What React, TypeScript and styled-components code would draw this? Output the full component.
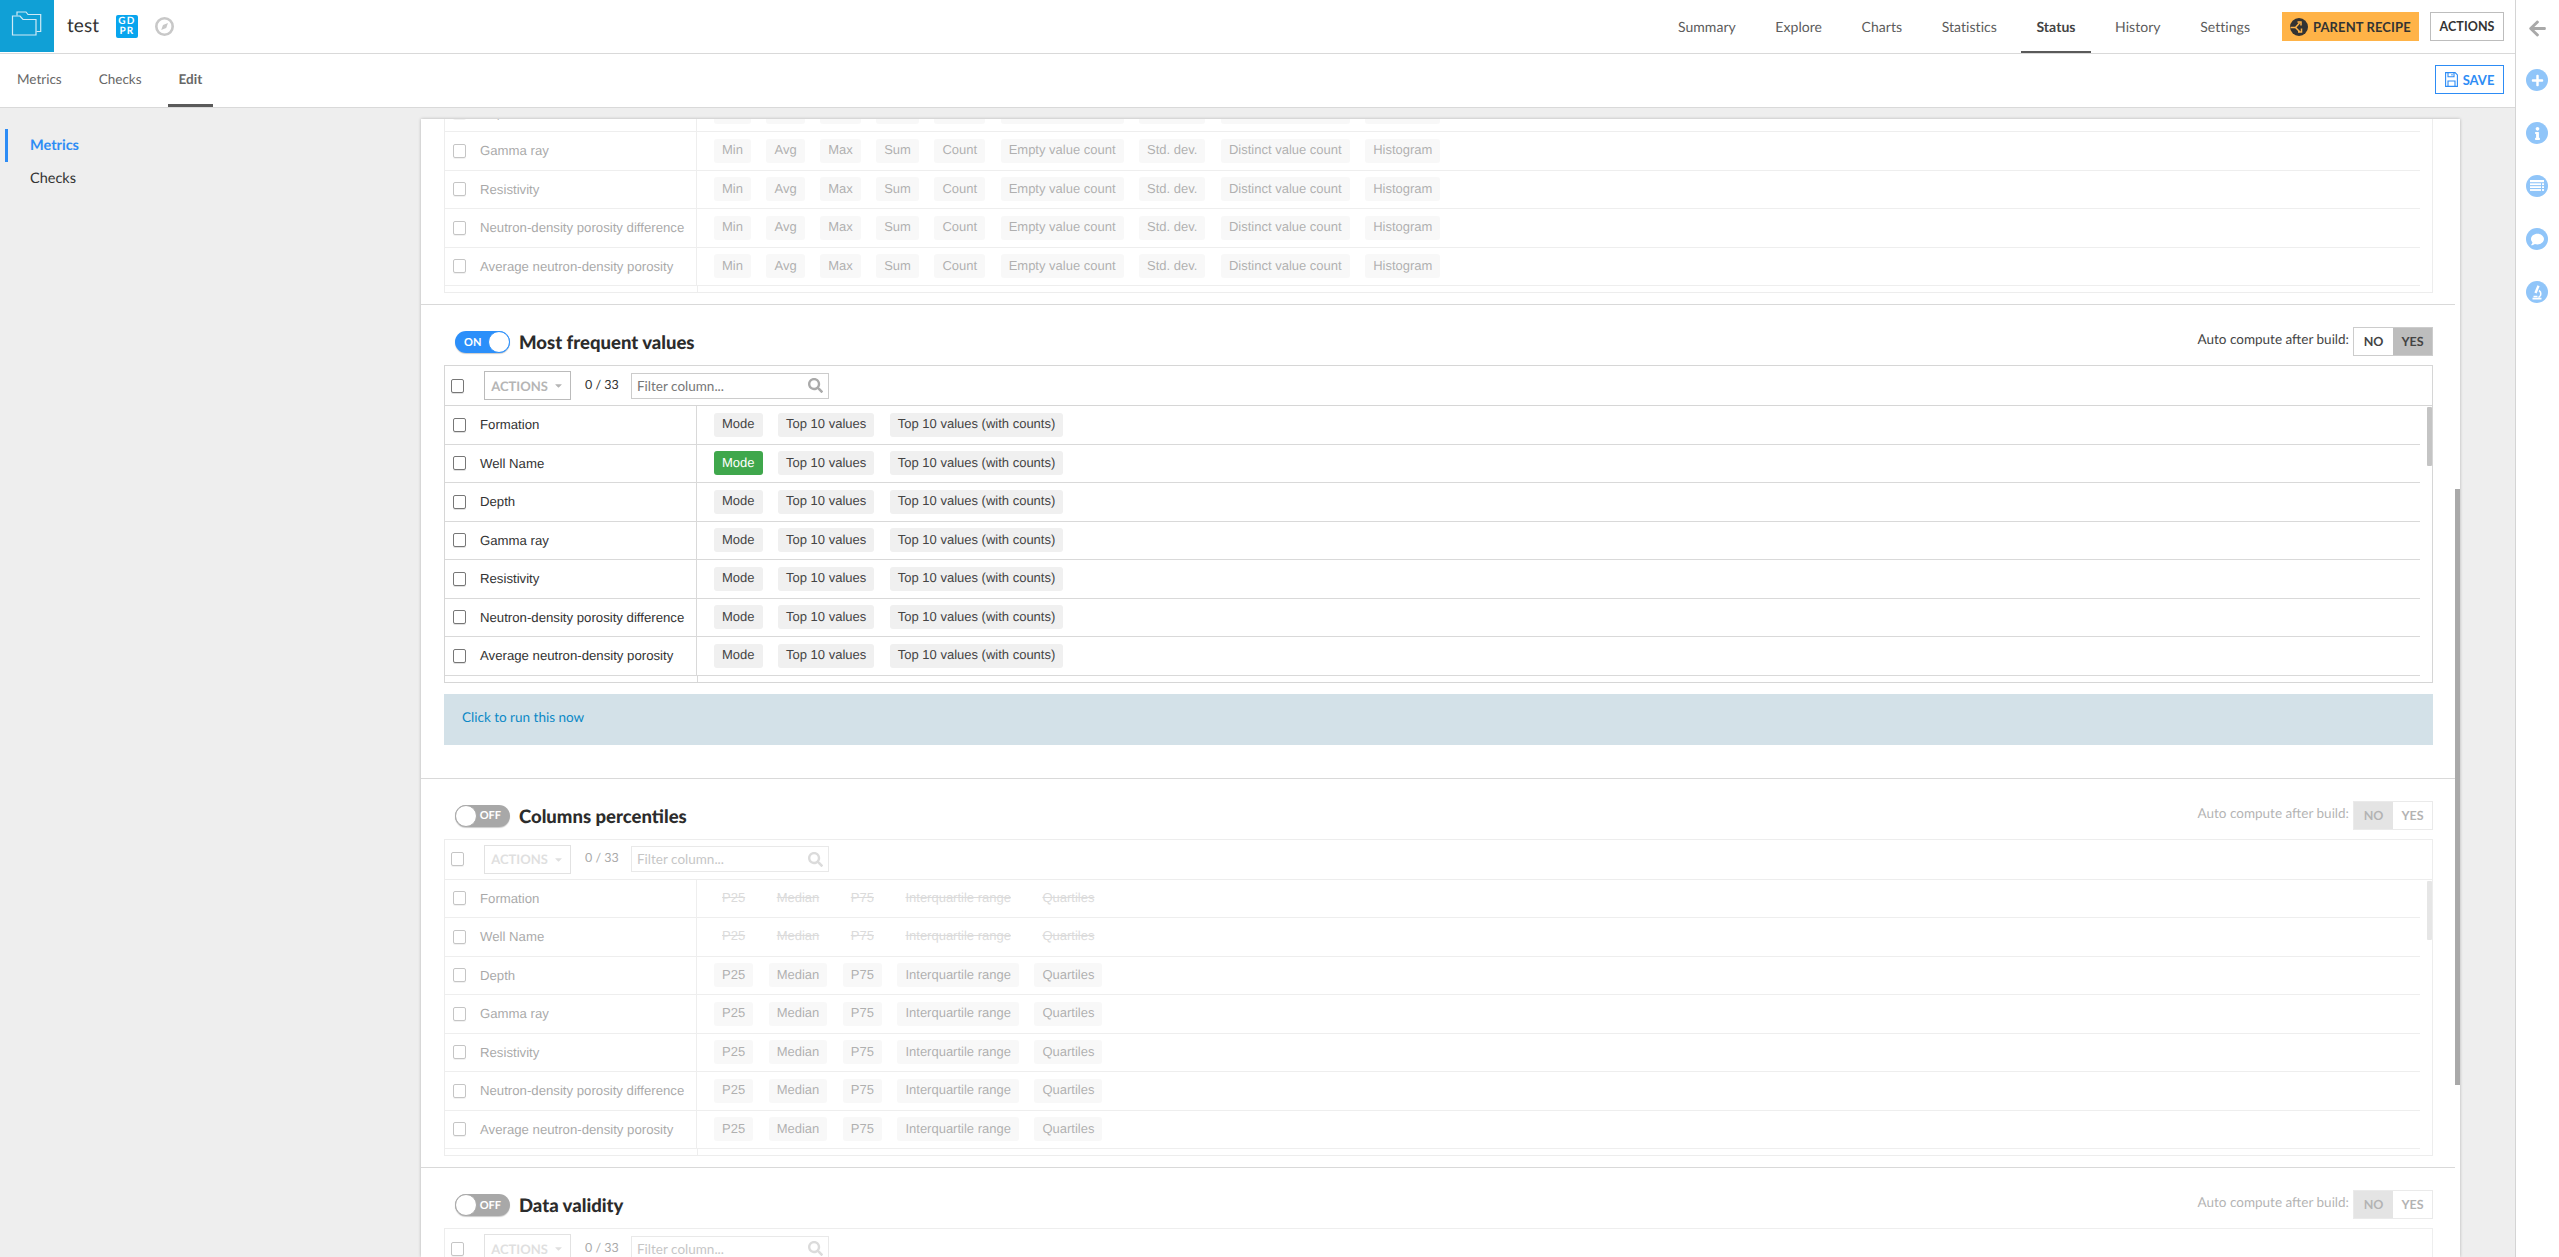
import React from "react";
import styled, { createGlobalStyle } from "styled-components";
import { FaArrowLeft, FaPlus, FaInfo, FaComment, FaCaretDown, FaSearch } from "react-icons/fa";

const SANS = `"Lato", "Liberation Sans", sans-serif`;
const ARIAL = `"Liberation Sans", Arial, sans-serif`;

const Global = createGlobalStyle`
  html, body { margin: 0; padding: 0; height: 100%; background: #fff; overflow: hidden; }
  * { box-sizing: border-box; }
  #root { height: 100%; text-rendering: geometricPrecision; }
`;

const Page = styled.div`
  display: flex; width: 2559px; height: 1257px; overflow: hidden; font-family: ${SANS}; color: #333;
`;
const Main = styled.div`
  flex: 0 0 2516px; display: flex; flex-direction: column; border-right: 1px solid #d4d4d4; min-width: 0;
`;
const TopBar = styled.header`
  flex: 0 0 53px; display: flex; align-items: stretch; border-bottom: 1px solid #d9d9d9; background: #fff; padding-right: 11px;
`;
const LogoBox = styled.div`
  flex: 0 0 54px; height: 52px; background: #10a0d6; display: flex;
`;
const Title = styled.div`
  margin-left: 13px; font-size: 19px; line-height: 52px; color: #333; letter-spacing: 0.1px; width: 49px;
`;
const Gdpr = styled.div`
  align-self: center; width: 22px; height: 23px; border-radius: 2px; background: #08a5ee; color: #fff;
  font-family: ${SANS}; font-weight: 700; font-size: 10px; line-height: 9.5px; letter-spacing: 1.2px; text-align: center; padding-top: 2px;
`;
const CompassWrap = styled.div`
  align-self: center; margin-left: 17px; display: flex;
`;
const TopNav = styled.nav`
  margin-left: auto; display: flex; gap: 9.5px; margin-right: 17px;
`;
const TopItem = styled.a<{ $active?: boolean }>`
  height: 53px; padding: 0 15px; display: flex; align-items: center; font-size: 14px; letter-spacing: 0.05px;
  color: ${p => (p.$active ? "#444" : "#5c5c5c")}; font-weight: ${p => (p.$active ? 700 : 400)};
  border-bottom: 2px solid ${p => (p.$active ? "#5a5a5a" : "transparent")}; padding-top: 1px;
`;
const ParentBtn = styled.button`
  align-self: flex-start; margin-top: 12px; width: 137px; height: 29px; background: #ffb347; border: 0; padding: 0 0 0 8px; display: flex; align-items: center; gap: 5px;
  font-family: ${SANS}; font-weight: 700; font-size: 13px; color: #333; letter-spacing: 0.1px; white-space: nowrap;
`;
const ActionsBtn = styled.button`
  align-self: flex-start; margin: 12px 0 0 11px; width: 74px; height: 29px; background: #fff; border: 1px solid #bdbdbd; padding: 0;
  font-family: ${SANS}; font-weight: 700; font-size: 12.5px; color: #333; letter-spacing: 0.1px;
`;
const SubBar = styled.div`
  flex: 0 0 53px; display: flex; align-items: stretch; border-bottom: 1px solid #d9d9d9; background: #fff; padding: 0 11px 0 6px;
`;
const SubTab = styled.a<{ $active?: boolean }>`
  height: 53px; padding: 0 11px; margin-right: 15px; display: flex; align-items: center; font-size: 13.5px;
  color: #666; font-weight: ${p => (p.$active ? 700 : 400)};
  border-bottom: 3px solid ${p => (p.$active ? "#5a5a5a" : "transparent")}; padding-top: 0;
`;
const SaveBtn = styled.button`
  margin: 11px 0 0 auto; width: 69px; height: 29px; background: #fff; border: 1px solid #2d8cf5; color: #2d8cf5; padding: 0; display: flex; align-items: center; justify-content: center; gap: 5px;
  font-family: ${SANS}; font-weight: 700; font-size: 13px;
`;
const Body = styled.div`
  flex: 1; min-height: 0; display: flex; background: #eee;
`;
const SideNav = styled.nav`
  flex: 0 0 421px; padding: 21px 0 0 5px; display: flex; flex-direction: column;
`;
const SideItem = styled.a<{ $active?: boolean }>`
  height: 33px; display: flex; align-items: center; padding-left: 22px; font-size: 14.5px;
  border-left: 3px solid ${p => (p.$active ? "#2d8cf5" : "transparent")};
  color: ${p => (p.$active ? "#2d8cf5" : "#333")}; font-weight: ${p => (p.$active ? 700 : 400)};
`;
const Panel = styled.main`
  position: relative; flex: 0 0 2039px; margin-top: 11px; background: #fff; overflow: hidden; box-shadow: 0 0 3px rgba(0,0,0,0.25); padding-right: 5px;
`;
const PageThumb = styled.div`
  position: absolute; right: 0; top: 370px; width: 5px; height: 596px; background: #a9a9a9;
`;
const Section = styled.section<{ $first?: boolean }>`
  padding: ${p => (p.$first ? "0" : "22px")} 22px 11px 23px; border-bottom: 1px solid #d9d9d9;
`;
const Head = styled.div`
  display: flex; align-items: flex-start; justify-content: space-between; height: 29px; margin-bottom: 9px;
`;
const HeadLeft = styled.div`
  display: flex; align-items: center; gap: 9px; margin: 4px 0 0 11px;
`;
const Toggle = styled.div<{ $on: boolean }>`
  position: relative; width: 55px; height: 22px; border-radius: 11px; background: ${p => (p.$on ? "#2b8ffa" : "#a8a8a8")};
  box-shadow: 0 1px 1px rgba(0,0,0,0.2); color: #fff; font-size: 11px; font-weight: 700; display: flex; align-items: center;
  justify-content: ${p => (p.$on ? "flex-start" : "flex-end")}; padding: 0 9px;
`;
const Knob = styled.span<{ $on: boolean }>`
  position: absolute; top: 0; ${p => (p.$on ? "right: 0;" : "left: 0;")} width: 22px; height: 22px; border-radius: 50%; background: #fff;
  border: 1px solid ${p => (p.$on ? "#2b8ffa" : "#a8a8a8")};
`;
const SectionTitle = styled.h3`
  margin: 0; font-size: 18.5px; font-weight: 900; color: #2c2c2c; letter-spacing: 0;
`;
const Auto = styled.div<{ $off: boolean }>`
  display: flex; align-items: flex-start; opacity: ${p => (p.$off ? 0.4 : 1)};
`;
const AutoLabel = styled.span`
  font-size: 13.5px; margin: 4px 4px 0 0; color: #444;
`;
const Seg = styled.div`
  display: flex; width: 80px; height: 29px; border: 1px solid #ccc;
`;
const SegBtn = styled.span<{ $sel: boolean }>`
  flex: 1; display: flex; align-items: center; justify-content: center; font-size: 12.5px; font-weight: 700; color: #444;
  background: ${p => (p.$sel ? "#bdbdbd" : "#fff")};
`;
const Table = styled.div<{ $off: boolean; $cut?: boolean }>`
  position: relative; border: 1px solid #d6d6d6; ${p => (p.$cut ? "border-top: 0; margin-top: -25.5px;" : "")} opacity: ${p => (p.$off ? 0.42 : 1)};
`;
const Toolbar = styled.div`
  height: 40px; display: flex; align-items: center; border-bottom: 1px solid #d6d6d6; padding-left: 6px;
`;
const Check = styled.input.attrs({ type: "checkbox" })`
  appearance: none; flex: 0 0 13px; width: 13px; height: 14px; margin: 0; border: 1px solid #777; border-radius: 2px; background: #fff; box-shadow: 0 1px 0 rgba(0,0,0,0.12);
`;
const ActBtn = styled.div`
  margin-left: 20px; width: 87px; height: 29px; border: 1px solid #bbb; color: #b5b5b5; font-size: 13px; font-weight: 700; display: flex; align-items: center; justify-content: center; gap: 5px;
`;
const Count = styled.span`
  margin-left: 14px; font-size: 12.5px; color: #333; width: 46px; padding-bottom: 3px; white-space: nowrap;
`;
const Filter = styled.div`
  width: 198px; height: 26px; border: 1px solid #ccc; display: flex; align-items: center; padding: 0 5px; color: #aaa;
`;
const FilterInput = styled.input`
  flex: 1; min-width: 0; border: 0; padding: 0; outline: 0; font-family: ${SANS}; font-size: 13.5px; color: #555;
  &::placeholder { color: #777; opacity: 1; }
`;
const Rows = styled.div`
  padding-right: 12px;
`;
const Row = styled.div`
  display: flex; height: 38.5px; border-bottom: 1px solid #d9d9d9;
`;
const NameCell = styled.div`
  flex: 0 0 252px; display: flex; align-items: center; padding-left: 8px; gap: 14px; border-right: 1px solid #d9d9d9;
  font-family: ${ARIAL}; font-size: 13.2px; color: #333; white-space: nowrap;
`;
const Chips = styled.div`
  display: flex; align-items: flex-start; gap: 15.5px; padding: 6.5px 0 0 17px;
`;
const Chip = styled.span<{ $green?: boolean; $strike?: boolean }>`
  height: 24px; padding: 0 8px 2px; border-radius: 3px; display: flex; align-items: center; font-family: ${ARIAL}; font-size: 13px; white-space: nowrap;
  background: ${p => (p.$strike ? "transparent" : p.$green ? "#3fa74c" : "#f0f0f0")};
  color: ${p => (p.$green ? "#fff" : p.$strike ? "#aaa" : "#444")};
  text-decoration: ${p => (p.$strike ? "line-through" : "none")};
`;
const Stub = styled.div`
  height: 6px; width: 253px; border-right: 1px solid #d9d9d9;
`;
const TableThumb = styled.div`
  position: absolute; right: 0; top: 41px; width: 5px; height: 59px; background: #c4c4c4; border-radius: 1px;
`;
const Alert = styled.div`
  margin: 11px 0 22px; height: 51px; background: #d3e1e8; display: flex; align-items: center; padding: 0 0 4px 18px; font-size: 13.5px; color: #0a88c6;
`;
const Rail = styled.aside`
  flex: 1; background: #fff; display: flex; flex-direction: column; align-items: center; padding-top: 18px; gap: 31px; padding-right: 1px;
`;
const Back = styled.div`
  height: 20px; color: #a9a9a9; font-size: 19px; display: flex; align-items: center;
`;
const Round = styled.div`
  width: 22px; height: 22px; border-radius: 50%; background: #90c5f9; color: #fff; display: flex; align-items: center; justify-content: center; font-size: 13px;
`;

const FolderIcon = () => (
  <svg width="54" height="52" viewBox="0 0 54 52" fill="none" stroke="#cfeaf6" strokeWidth="1.2">
    <path d="M12.500 16H20l3 3.500H36V35H12.500Z" />
    <path d="M17 15.500V12H26l2 2.500H40.700V31.500H36.500" />
  </svg>
);
const CompassIcon = () => (
  <svg width="19" height="19" viewBox="0 0 19 19">
    <circle cx="9.5" cy="9.5" r="8.200" fill="none" stroke="#c8c8c8" strokeWidth="2.600" />
    <path d="M13 6l-1.800 5-5 2 1.800-5z" fill="#c8c8c8" />
  </svg>
);
const RecipeIcon = () => (
  <svg width="18" height="18" viewBox="0 0 18 18">
    <circle cx="9" cy="9" r="9" fill="#333" />
    <path d="M0.500 9.500h5l4-4.500M7.500 4h3.500v3.500M5.500 9.500l4 4M8 14h3.500v-3.500" fill="none" stroke="#ffb347" strokeWidth="1.500" />
  </svg>
);
const SaveIcon = () => (
  <svg width="13" height="15" viewBox="0 0 13 15" fill="none" stroke="#2d8cf5" strokeWidth="1.100">
    <path d="M.6.6h9.500l2.300 2.300v11.500H.6z" />
    <path d="M3 .6v4.200h6V.6M7 2v1.500M3 14.400V9h7v5.400" />
  </svg>
);
const ListIcon = () => (
  <svg width="14" height="12" viewBox="0 0 14 12" fill="#fff">
    <rect x="0" y="0" width="14" height="2.200" />
    <rect x="0" y="3.300" width="11" height="1.800" /><rect x="12" y="3.300" width="2" height="1.800" />
    <rect x="0" y="6.200" width="11" height="1.800" /><rect x="12" y="6.200" width="2" height="1.800" />
    <rect x="0" y="9.100" width="11" height="1.800" /><rect x="12" y="9.100" width="2" height="1.800" />
  </svg>
);
const MicroscopeIcon = () => (
  <svg width="12" height="15" viewBox="0 0 12 15" fill="none" stroke="#fff" strokeWidth="1.500">
    <path d="M7.500.8L4.500 8" strokeWidth="2.400" />
    <path d="M8 5.500c2.500 1.500 2.500 5.500-.5 7" />
    <path d="M1.500 13.600h9" strokeWidth="1.800" />
    <path d="M2.500 11.500h4" />
  </svg>
);

const NAMES = ["Formation", "Well Name", "Depth", "Gamma ray", "Resistivity", "Neutron-density porosity difference", "Average neutron-density porosity"];
const STATS = ["Min", "Avg", "Max", "Sum", "Count", "Empty value count", "Std. dev.", "Distinct value count", "Histogram"];
const FREQ = ["Mode", "Top 10 values", "Top 10 values (with counts)"];
const PCT = ["P25", "Median", "P75", "Interquartile range", "Quartiles"];

type Sec = { title: string; on: boolean };

const Header = ({ title, on }: Sec) => (
  <Head>
    <HeadLeft>
      <Toggle $on={on}>{on ? "ON" : "OFF"}<Knob $on={on} /></Toggle>
      <SectionTitle>{title}</SectionTitle>
    </HeadLeft>
    <Auto $off={!on}>
      <AutoLabel>Auto compute after build:</AutoLabel>
      <Seg>
        <SegBtn $sel={!on}>NO</SegBtn>
        <SegBtn $sel={on}>YES</SegBtn>
      </Seg>
    </Auto>
  </Head>
);

const TableTools = () => (
  <Toolbar>
    <Check />
    <ActBtn>ACTIONS <FaCaretDown size={11} /></ActBtn>
    <Count>0 / 33</Count>
    <Filter>
      <FilterInput placeholder="Filter column..." />
      <FaSearch size={15} color="#aaa" />
    </Filter>
  </Toolbar>
);

const TableRow = ({ name, chips, green, strike }: { name: string; chips: string[]; green?: string; strike?: boolean }) => (
  <Row>
    <NameCell><Check />{name}</NameCell>
    <Chips>
      {chips.map(c => <Chip key={c} $green={c === green} $strike={strike}>{c}</Chip>)}
    </Chips>
  </Row>
);

export default function App() {
  return (
    <Page>
      <Global />
      <Main>
        <TopBar>
          <LogoBox><FolderIcon /></LogoBox>
          <Title>test</Title>
          <Gdpr>GD<br />PR</Gdpr>
          <CompassWrap><CompassIcon /></CompassWrap>
          <TopNav>
            {["Summary", "Explore", "Charts", "Statistics", "Status", "History", "Settings"].map(t => (
              <TopItem key={t} $active={t === "Status"}>{t}</TopItem>
            ))}
          </TopNav>
          <ParentBtn><RecipeIcon />PARENT RECIPE</ParentBtn>
          <ActionsBtn>ACTIONS</ActionsBtn>
        </TopBar>
        <SubBar>
          <SubTab>Metrics</SubTab>
          <SubTab>Checks</SubTab>
          <SubTab $active>Edit</SubTab>
          <SaveBtn><SaveIcon />SAVE</SaveBtn>
        </SubBar>
        <Body>
          <SideNav>
            <SideItem $active>Metrics</SideItem>
            <SideItem>Checks</SideItem>
          </SideNav>
          <Panel>
            <PageThumb />
            <Section $first>
              <Table $off $cut>
                <Rows>
                  {NAMES.slice(2).map(n => <TableRow key={n} name={n} chips={STATS} />)}
                </Rows>
                <Stub />
              </Table>
            </Section>
            <Section>
              <Header title="Most frequent values" on />
              <Table $off={false}>
                <TableThumb />
                <TableTools />
                <Rows>
                  {NAMES.map(n => <TableRow key={n} name={n} chips={FREQ} green={n === "Well Name" ? "Mode" : undefined} />)}
                </Rows>
                <Stub />
              </Table>
              <Alert>Click to run this now</Alert>
            </Section>
            <Section>
              <Header title="Columns percentiles" on={false} />
              <Table $off>
                <TableThumb />
                <TableTools />
                <Rows>
                  {NAMES.map((n, i) => <TableRow key={n} name={n} chips={PCT} strike={i < 2} />)}
                </Rows>
                <Stub />
              </Table>
            </Section>
            <Section>
              <Header title="Data validity" on={false} />
              <Table $off>
                <TableTools />
              </Table>
            </Section>
          </Panel>
        </Body>
      </Main>
      <Rail>
        <Back><FaArrowLeft /></Back>
        <Round><FaPlus /></Round>
        <Round><FaInfo /></Round>
        <Round><ListIcon /></Round>
        <Round><FaComment /></Round>
        <Round><MicroscopeIcon /></Round>
      </Rail>
    </Page>
  );
}
